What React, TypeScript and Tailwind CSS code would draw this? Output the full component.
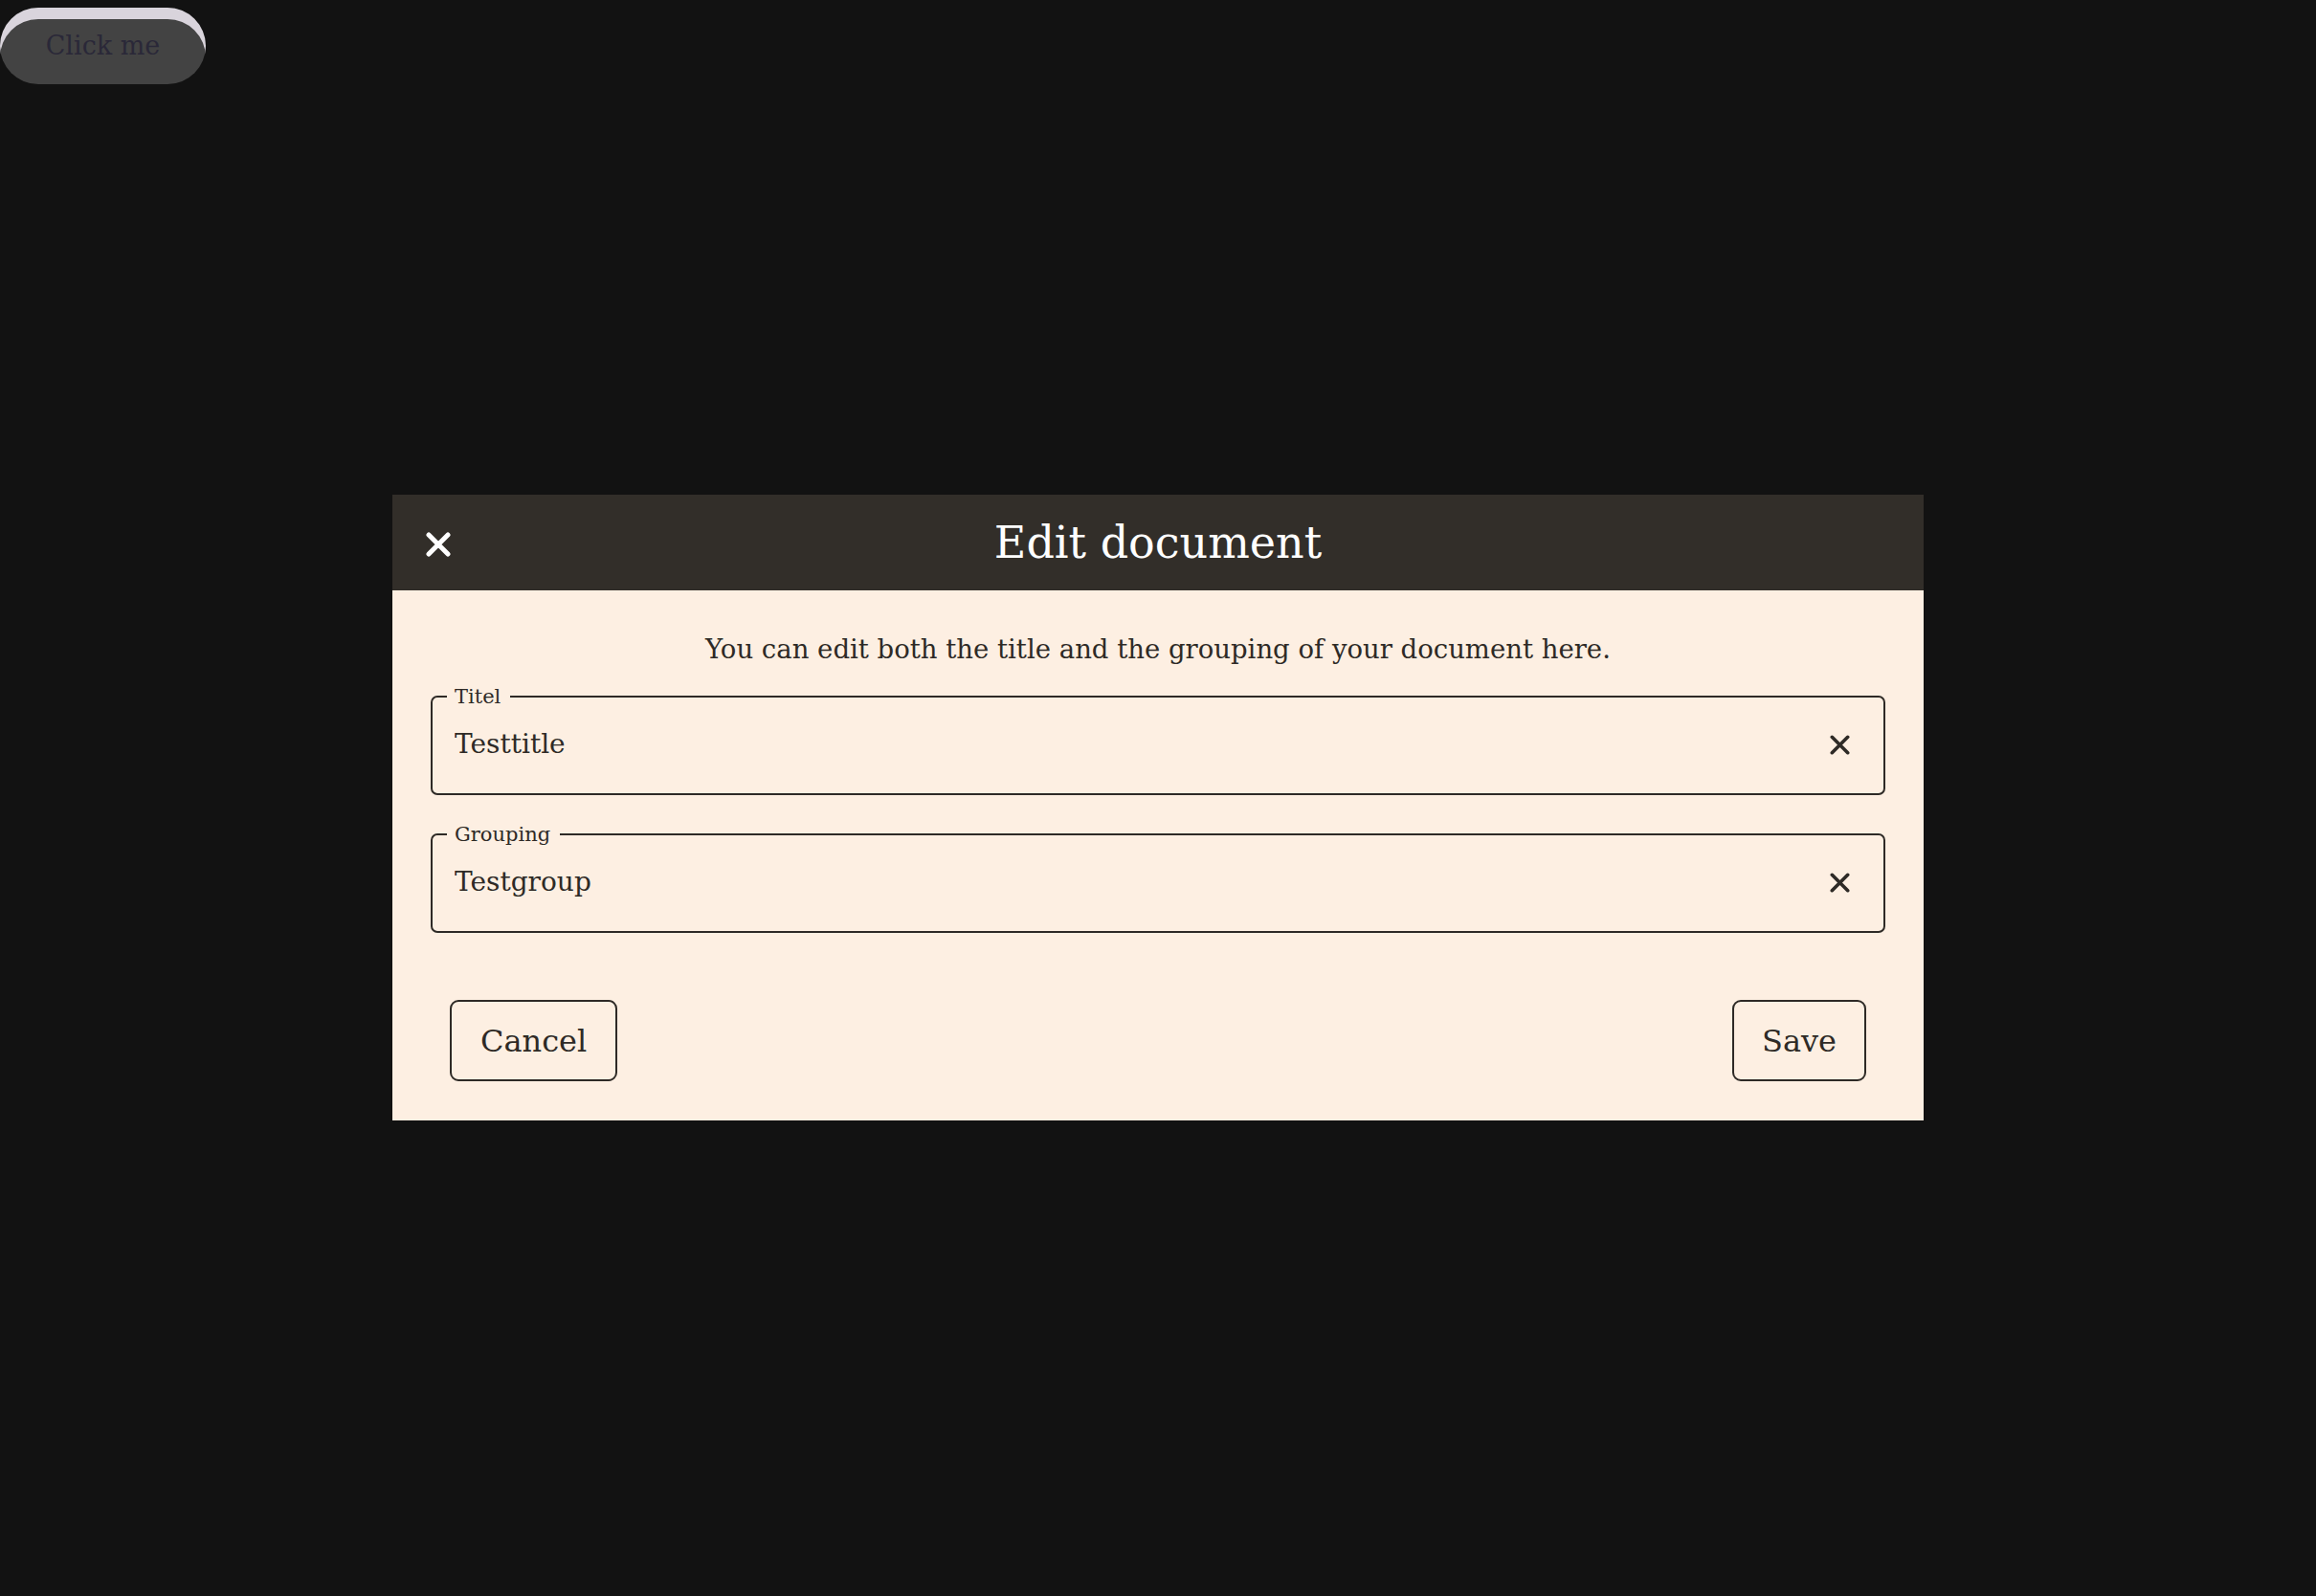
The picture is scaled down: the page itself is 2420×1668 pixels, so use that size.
import { useState } from "react";

const serif = { fontFamily: '"DejaVu Serif", "Liberation Serif", serif' };

function Cross({ size, stroke, className }: { size: number; stroke: number; className?: string }) {
  const p = stroke / 2 + 0.5;
  return (
    <svg width={size} height={size} viewBox={`0 0 ${size} ${size}`} className={className} fill="none">
      <path
        d={`M${p} ${p} L${size - p} ${size - p} M${size - p} ${p} L${p} ${size - p}`}
        stroke="currentColor"
        strokeWidth={stroke}
        strokeLinecap="round"
      />
    </svg>
  );
}

function Field({ label, value, onChange }: { label: string; value: string; onChange: (v: string) => void }) {
  return (
    <fieldset className="rounded-[7px] border-2 border-[#2e2a26] pb-[13px]">
      <legend className="ml-[15px] pl-[8px] pr-[10px] text-[21px] leading-[24px] text-[#2e2a26]">{label}</legend>
      <div className="flex h-[76px] items-center gap-4 pl-[23px] pr-[35px]">
        <input
          className="min-w-0 flex-1 bg-transparent text-[28px] leading-[36px] text-[#2e2a26] outline-none"
          value={value}
          onChange={(e) => onChange(e.target.value)}
        />
        <button className="text-[#2e2a26]" onClick={() => onChange("")}>
          <Cross size={21} stroke={3.6} />
        </button>
      </div>
    </fieldset>
  );
}

export default function App() {
  const [title, setTitle] = useState("Testtitle");
  const [group, setGroup] = useState("Testgroup");

  return (
    <div className="min-h-screen bg-[#121212]" style={serif}>
      <div className="pt-2">
        <button className="h-20 w-[215px] rounded-full bg-[#434343] text-[27px] text-[#2a2838] shadow-[inset_0_12px_0_#d9d4dc]">
          Click me
        </button>
      </div>

      <div className="fixed inset-0 flex items-center justify-center pt-5">
        <div className="w-[1600px] bg-[#fdefe2]">
          <div className="relative flex h-[100px] items-center justify-center bg-[#322e29]">
            <button className="absolute left-[35px] top-[39px] text-white">
              <Cross size={26} stroke={5} />
            </button>
            <h1 className="text-[46px] leading-none text-white">Edit document</h1>
          </div>

          <div className="px-10 pt-[43px] pb-[41px]">
            <p className="text-center text-[27.5px] leading-[36px] text-[#2e2a26]">
              You can edit both the title and the grouping of your document here.
            </p>
            <div className="mt-[20px] flex flex-col gap-[29px]">
              <Field label="Titel" value={title} onChange={setTitle} />
              <Field label="Grouping" value={group} onChange={setGroup} />
            </div>
            <div className="mt-[70px] flex justify-between px-5">
              <button className="h-[85px] rounded-[9px] border-2 border-[#2e2a26] px-[30px] text-[32px] text-[#2e2a26]">
                Cancel
              </button>
              <button className="h-[85px] rounded-[9px] border-2 border-[#2e2a26] px-[29px] text-[32px] text-[#2e2a26]">
                Save
              </button>
            </div>
          </div>
        </div>
      </div>
    </div>
  );
}
